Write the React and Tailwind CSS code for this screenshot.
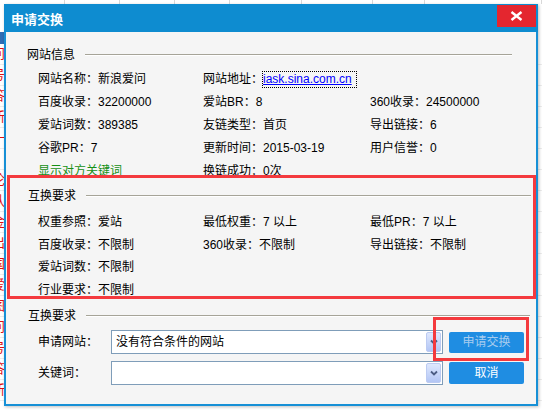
import React from 'react'

const FONT = { fontFamily: '"Liberation Sans", "Noto Sans CJK SC", sans-serif' }

const INFO_ROWS = [
  ['网站名称：新浪爱问', 'link', '360收录：24500000'],
  ['百度收录：32200000', '爱站BR：8', '360收录：24500000'],
  ['爱站词数：389385', '友链类型：首页', '导出链接：6'],
  ['谷歌PR：7', '更新时间：2015-03-19', '用户信誉：0'],
  ['green', '换链成功：0次', ''],
]

const REQ_ROWS = [
  ['权重参照：爱站', '最低权重：7 以上', '最低PR：7 以上'],
  ['百度收录：不限制', '360收录：不限制', '导出链接：不限制'],
  ['爱站词数：不限制', '', ''],
  ['行业要求：不限制', '', ''],
]

function SectionHead({ title }) {
  return (
    <div className="flex items-center h-[16px]">
      <span className="text-[12px] leading-[16px] text-black whitespace-nowrap">{title}</span>
      <div className="flex-1 ml-[10px] h-[2px] border-t border-[#a6a498] border-b border-b-white" />
    </div>
  )
}

function Cell({ v }) {
  if (v === 'link') {
    return (
      <div className="flex items-center">
        <span>网站地址：</span>
        <span className="outline outline-1 outline-dotted outline-black w-[93px] overflow-hidden whitespace-nowrap text-[#0000ff] underline leading-[15px]">iask.sina.com.cn</span>
      </div>
    )
  }
  if (v === 'green') return <span className="text-[#159015]">显示对方关键词</span>
  return <span>{v}</span>
}

function Rows({ rows, gap }) {
  return (
    <div className={`flex flex-col ${gap}`}>
      {rows.map((r, i) => (
        <div key={i} className="grid grid-cols-[165px_167px_1fr] h-[16px] items-center text-[12px] leading-[16px] text-black whitespace-nowrap">
          <Cell v={r[0]} />
          <Cell v={r[1]} />
          <Cell v={i === 0 && r[1] === 'link' ? '' : r[2]} />
        </div>
      ))}
    </div>
  )
}

function Combo({ text }) {
  return (
    <div className="w-[332px] h-[24px] bg-white border border-[#7f9db9] flex items-center p-[1px]">
      <span className="flex-1 pl-[3px] text-[12px] text-black">{text}</span>
      <div className="w-[15px] h-[20px] rounded-[2px] border border-[#bccbf2] bg-gradient-to-b from-[#dfe8fd] to-[#b3c6f5] flex items-center justify-center">
        <svg width="8" height="6" viewBox="0 0 8 6">
          <path d="M1 1.5 L4 4.5 L7 1.5" fill="none" stroke="#4c5d84" strokeWidth="1.8" />
        </svg>
      </div>
    </div>
  )
}

function Background() {
  const reds = ['问', '号', '答', '新', '一', '1', '论', '队', '金', '出', '国', '爱', '图', '问', '号', '答', '新']
  return (
    <div className="flex flex-col">
      <div className="h-[4px] flex">
        {[65, 55, 55, 55, 72, 71, 52, 117].map((w, i) => (
          <div key={i} className="h-full border-r border-[#d8d8d8]" style={{ width: w }} />
        ))}
      </div>
      <div className="h-[28px]" />
      <div className="h-[12px] bg-[#2f6db5] w-[8px]" />
      {reds.map((c, i) => (
        <div key={i} className="h-[21px] flex items-center border-b border-[#ececec] text-[13px] text-[#e01010] -ml-[8px]">
          {c}
        </div>
      ))}
    </div>
  )
}

export default function App() {
  return (
    <div className="relative w-[542px] h-[410px] overflow-hidden bg-white" style={FONT}>
      <Background />

      {/* dialog */}
      <div className="absolute left-[4px] top-[4px] w-[534px] h-[402px] bg-[#f5f5f5] border-2 border-t-0 border-[#1790d6] flex flex-col shadow-[1px_1px_3px_rgba(0,0,0,0.25)]">
        <div className="h-[28px] -mx-[2px] bg-[#0e8cd0] flex items-start justify-between">
          <span className="pl-[7px] pt-[8px] text-[13px] leading-[16px] font-bold text-white">申请交换</span>
          <button className="mt-[1px] mr-[2px] w-[39px] h-[22px] bg-[#e4262f] flex items-center justify-center">
            <svg width="13" height="10" viewBox="0 0 13 10">
              <path d="M1.5 1 L11.5 9 M11.5 1 L1.5 9" stroke="white" strokeWidth="2.4" />
            </svg>
          </button>
        </div>

        {/* 网站信息 */}
        <div className="mt-[15px] pl-[21px] pr-[24px]">
          <SectionHead title="网站信息" />
        </div>
        <div className="mt-[8px] pl-[32px]">
          <Rows rows={INFO_ROWS} gap="gap-[7px]" />
        </div>

        {/* 互换要求 (highlighted) */}
        <div className="-mt-[4px] ml-[1px] h-[124px] border-[3px] border-[#f43a3e] pt-[10px]">
          <div className="pl-[18px] pr-[2px]">
            <SectionHead title="互换要求" />
          </div>
          <div className="mt-[10px] pl-[28px]">
            <Rows rows={REQ_ROWS} gap="gap-[6.7px]" />
          </div>
        </div>

        {/* 互换要求 form */}
        <div className="mt-[9px] pl-[22px] pr-[6px]">
          <SectionHead title="互换要求" />
        </div>
        <div className="mt-[6px] pl-[32px] flex flex-col gap-[7px]">
          <div className="flex items-center">
            <span className="w-[73px] text-[12px] text-black">申请网站：</span>
            <Combo text="没有符合条件的网站" />
            <button className="ml-[6px] w-[75px] h-[21px] bg-[#1f8de2] rounded-[2px] text-[12px] text-[#a7ccef]">申请交换</button>
          </div>
          <div className="flex items-center">
            <span className="w-[73px] text-[12px] text-black">关键词：</span>
            <Combo text="" />
            <button className="ml-[6px] w-[75px] h-[22px] bg-[#1f8de2] rounded-[2px] text-[12px] text-white">取消</button>
          </div>
        </div>

        {/* annotation box round the submit button */}
        <div className="absolute left-[427px] top-[313px] w-[96px] h-[44px] border-[3px] border-[#f43a3e] pointer-events-none" />
      </div>
    </div>
  )
}
